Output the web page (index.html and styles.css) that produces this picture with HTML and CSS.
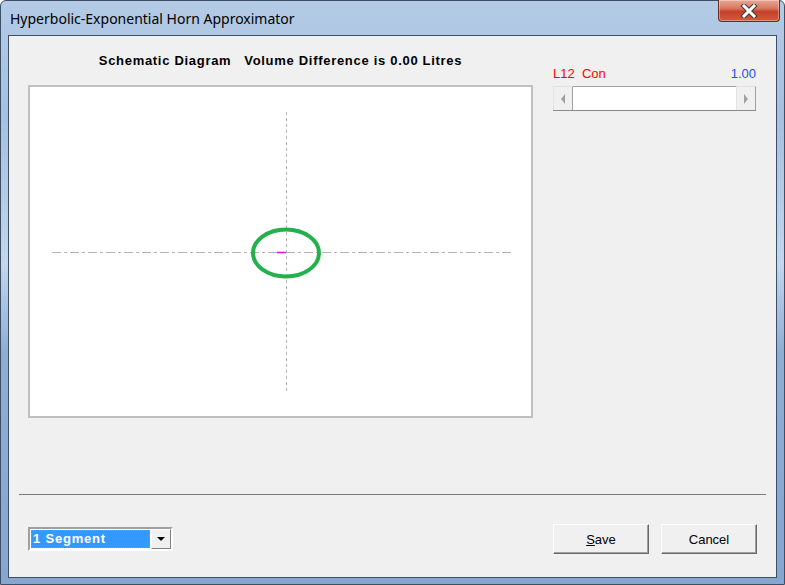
FILE: index.html
```html
<!DOCTYPE html>
<html lang="en">
<head>
  <meta charset="UTF-8">
  <title>Hyperbolic-Exponential Horn Approximator</title>
  <link rel="stylesheet" href="styles.css">
</head>
<body>

<div class="ventana">
  <div class="barra-titulo">
    <span class="titulo">Hyperbolic-Exponential Horn Approximator</span>
    <div class="cerrar">
      <svg width="22" height="14" viewBox="0 0 22 14">
        <path d="M6 2 L16 12 M16 2 L6 12" stroke="#3a3a3a" stroke-width="5" stroke-linecap="square"/>
        <path d="M6 2 L16 12 M16 2 L6 12" stroke="#ffffff" stroke-width="3" stroke-linecap="square"/>
      </svg>
    </div>
  </div>

  <div class="cliente">
    <div class="principal">
      <div class="columna-diagrama">
        <h2 class="cabecera">Schematic Diagram &nbsp; Volume Difference is 0.00 Litres</h2>
        <div class="diagrama">
          <svg width="501" height="329" viewBox="0 0 501 329">
            <line x1="256.5" y1="25" x2="256.5" y2="305" stroke="#b4b4b4" stroke-width="1" stroke-dasharray="3 3"/>
            <line x1="22" y1="165.5" x2="482" y2="165.5" stroke="#b4b4b4" stroke-width="1" stroke-dasharray="9 3 3 3"/>
            <ellipse cx="256" cy="166" rx="33" ry="23.5" fill="none" stroke="#22b14c" stroke-width="4"/>
            <line x1="247" y1="165.5" x2="256" y2="165.5" stroke="#e010e0" stroke-width="1.5"/>
          </svg>
        </div>
      </div>

      <div class="columna-control">
        <div class="etiquetas">
          <span class="etq-roja">L12&nbsp; Con</span>
          <span class="etq-azul">1.00</span>
        </div>
        <div class="barra-desplaz">
          <div class="flecha"><span class="tri-izq"></span></div>
          <div class="pista"></div>
          <div class="flecha"><span class="tri-der"></span></div>
        </div>
      </div>
    </div>

    <div class="separador"></div>

    <div class="pie">
      <div class="combo">
        <div class="combo-valor"><span>1 Segment</span></div>
        <div class="combo-boton"><span class="tri-abajo"></span></div>
      </div>
      <div class="botones">
        <button class="boton"><u>S</u>ave</button>
        <button class="boton">Cancel</button>
      </div>
    </div>
  </div>
</div>

</body>
</html>
```

FILE: styles.css
```css
body {
  margin: 0;
  padding: 0;
  font-family: 'Liberation Sans', Arial, sans-serif;
  background-color: #ffffff;
}

.ventana {
  width: 785px;
  height: 585px;
  box-sizing: border-box;
  border: 1px solid #3d4f66;
  border-radius: 6px 6px 0 0;
  background: linear-gradient(180deg, #b4cbe6 0%, #a6c0de 20%, #c3d6ec 45%, #90aed4 60%, #86a6cf 100%);
  padding: 0 7px 6px 7px;
  display: flex;
  flex-direction: column;
}

.barra-titulo {
  height: 34px;
  display: flex;
  justify-content: space-between;
  align-items: flex-start;
}

.titulo {
  margin-top: 8px;
  margin-left: 2px;
  font-family: 'Noto Sans', sans-serif;
  font-size: 14px;
  color: #000000;
}

.cerrar {
  width: 60px;
  height: 21px;
  margin-top: -1px;
  margin-right: -3px;
  border: 1px solid #6b2a22;
  border-top: none;
  border-radius: 0 0 4px 4px;
  background: linear-gradient(180deg, #e8a897 0%, #d9775f 40%, #c5402a 55%, #d25a3e 100%);
  display: flex;
  justify-content: center;
  align-items: center;
  box-shadow: inset 0 0 0 1px rgba(255, 255, 255, 0.35);
}

.cliente {
  flex: 1;
  border: 1px solid #3d4f66;
  background-color: #f0f0f0;
  display: flex;
  flex-direction: column;
}

.principal {
  display: flex;
  gap: 20px;
  padding-left: 19px;
}

.columna-diagrama {
  display: flex;
  flex-direction: column;
  align-items: center;
}

.cabecera {
  margin: 17px 0 16px 0;
  height: 16px;
  line-height: 16px;
  font-size: 13px;
  font-weight: bold;
  letter-spacing: 0.7px;
  color: #000000;
}

.diagrama {
  width: 501px;
  height: 329px;
  border: 2px solid #c0c0c0;
  background-color: #ffffff;
}

.diagrama svg {
  display: block;
}

.columna-control {
  width: 203px;
  padding-top: 30px;
}

.etiquetas {
  display: flex;
  justify-content: space-between;
  font-size: 13px;
  height: 15px;
  line-height: 15px;
  margin-bottom: 5px;
}

.etq-roja {
  color: #ff0000;
}

.etq-azul {
  color: #1f4ff0;
}

.barra-desplaz {
  height: 24px;
  display: flex;
  border-bottom: 1px solid #8a8a8a;
}

.flecha {
  width: 18px;
  background-color: #f0f0f0;
  border-top: 1px solid #e3e3e3;
  border-left: 1px solid #e3e3e3;
  border-right: 1px solid #a0a0a0;
  display: flex;
  justify-content: center;
  align-items: center;
}

.pista {
  flex: 1;
  background-color: #ffffff;
  border-top: 1px solid #a0a0a0;
}

.tri-izq {
  width: 0;
  height: 0;
  border-top: 5px solid transparent;
  border-bottom: 5px solid transparent;
  border-right: 4px solid #a0a0a0;
}

.tri-der {
  width: 0;
  height: 0;
  border-top: 5px solid transparent;
  border-bottom: 5px solid transparent;
  border-left: 4px solid #a0a0a0;
}

.separador {
  margin: 76px 10px 0 10px;
  height: 1px;
  background-color: #7a7a7a;
}

.pie {
  display: flex;
  justify-content: space-between;
  align-items: flex-start;
  padding: 29px 19px 0 19px;
}

.combo {
  margin-top: 3px;
  width: 141px;
  height: 20px;
  display: flex;
  border-top: 2px solid #a0a0a0;
  border-left: 2px solid #a0a0a0;
  border-right: 2px solid #ffffff;
  border-bottom: 2px solid #ffffff;
  background-color: #ffffff;
}

.combo-valor {
  flex: 1;
  padding: 1px;
  background-color: #ffffff;
}

.combo-valor span {
  display: block;
  height: 16px;
  line-height: 16px;
  border: 1px dotted #000000;
  outline: 1px dotted #e08a20;
  outline-offset: -1px;
  background-color: #3399ff;
  color: #ffffff;
  font-size: 13px;
  font-weight: bold;
  letter-spacing: 0.8px;
  padding-left: 1px;
}

.combo-boton {
  width: 18px;
  background-color: #f0f0f0;
  border-top: 1px solid #ffffff;
  border-left: 1px solid #ffffff;
  border-right: 1px solid #808080;
  border-bottom: 1px solid #808080;
  display: flex;
  justify-content: center;
  align-items: center;
}

.tri-abajo {
  width: 0;
  height: 0;
  border-left: 4px solid transparent;
  border-right: 4px solid transparent;
  border-top: 4px solid #000000;
}

.botones {
  display: flex;
  gap: 12px;
}

.boton {
  width: 96px;
  height: 30px;
  padding: 0;
  background-color: #f0f0f0;
  border-top: 1px solid #ffffff;
  border-left: 1px solid #ffffff;
  border-right: 1px solid #696969;
  border-bottom: 1px solid #696969;
  box-shadow: inset -1px -1px 0 #a0a0a0;
  font-family: 'Liberation Sans', Arial, sans-serif;
  font-size: 13px;
  color: #000000;
}
```
